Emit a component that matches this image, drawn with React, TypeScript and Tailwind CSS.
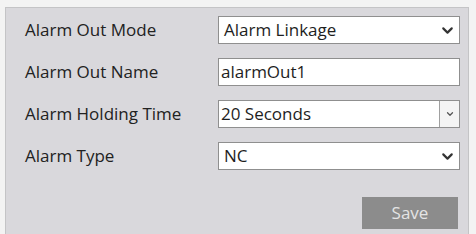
import { ChevronDown } from 'lucide-react';

const font = { fontFamily: '"Open Sans", "Noto Sans", sans-serif' };

function Row({ label, children }: { label: string; children: React.ReactNode }) {
  return (
    <div className="flex items-center h-[28px]">
      <div className="w-[193px] text-[17px] text-[#222]">{label}</div>
      {children}
    </div>
  );
}

function SelectBox({ value }: { value: string }) {
  return (
    <div className="flex items-center justify-between w-[242px] h-[28px] bg-white border border-[#8f8f8f] pl-[5px] pr-[3px] text-[17px] text-[#1e1e1e]">
      <span>{value}</span>
      <ChevronDown size={17} strokeWidth={3} className="text-[#333]" />
    </div>
  );
}

export default function App() {
  return (
    <div className="w-[476px] h-[234px] overflow-hidden bg-[#f3f3f3] pt-[7px] pl-[5px]" style={font}>
      <div className="w-[464px] h-[240px] bg-[#d9d8dc] border border-[#c4c4c6] pl-[19px] pt-[8px]">
        <div className="flex flex-col gap-[14px]">
          <Row label="Alarm Out Mode">
            <SelectBox value="Alarm Linkage" />
          </Row>
          <Row label="Alarm Out Name">
            <div className="flex items-center w-[242px] h-[28px] bg-white border border-[#8f8f8f] pl-[2px] text-[17px] text-[#1e1e1e]">
              alarmOut1
            </div>
          </Row>
          <Row label="Alarm Holding Time">
            <div className="flex items-center w-[242px] h-[28px] bg-white border border-[#8f8f8f] text-[17px] text-[#1e1e1e]">
              <span className="flex-1 pl-[2px]">20 Seconds</span>
              <div className="w-[20px] h-full border-l border-[#a0a0a0] bg-[#f4f4f4] flex items-center justify-center">
                <ChevronDown size={10} strokeWidth={3} className="text-[#555]" />
              </div>
            </div>
          </Row>
          <Row label="Alarm Type">
            <SelectBox value="NC" />
          </Row>
        </div>
        <div className="flex justify-end pr-[10px] mt-[27px]">
          <button className="w-[96px] h-[32px] bg-[#8c8c8c] text-[#e4e4e4] text-[17px]">Save</button>
        </div>
      </div>
    </div>
  );
}
